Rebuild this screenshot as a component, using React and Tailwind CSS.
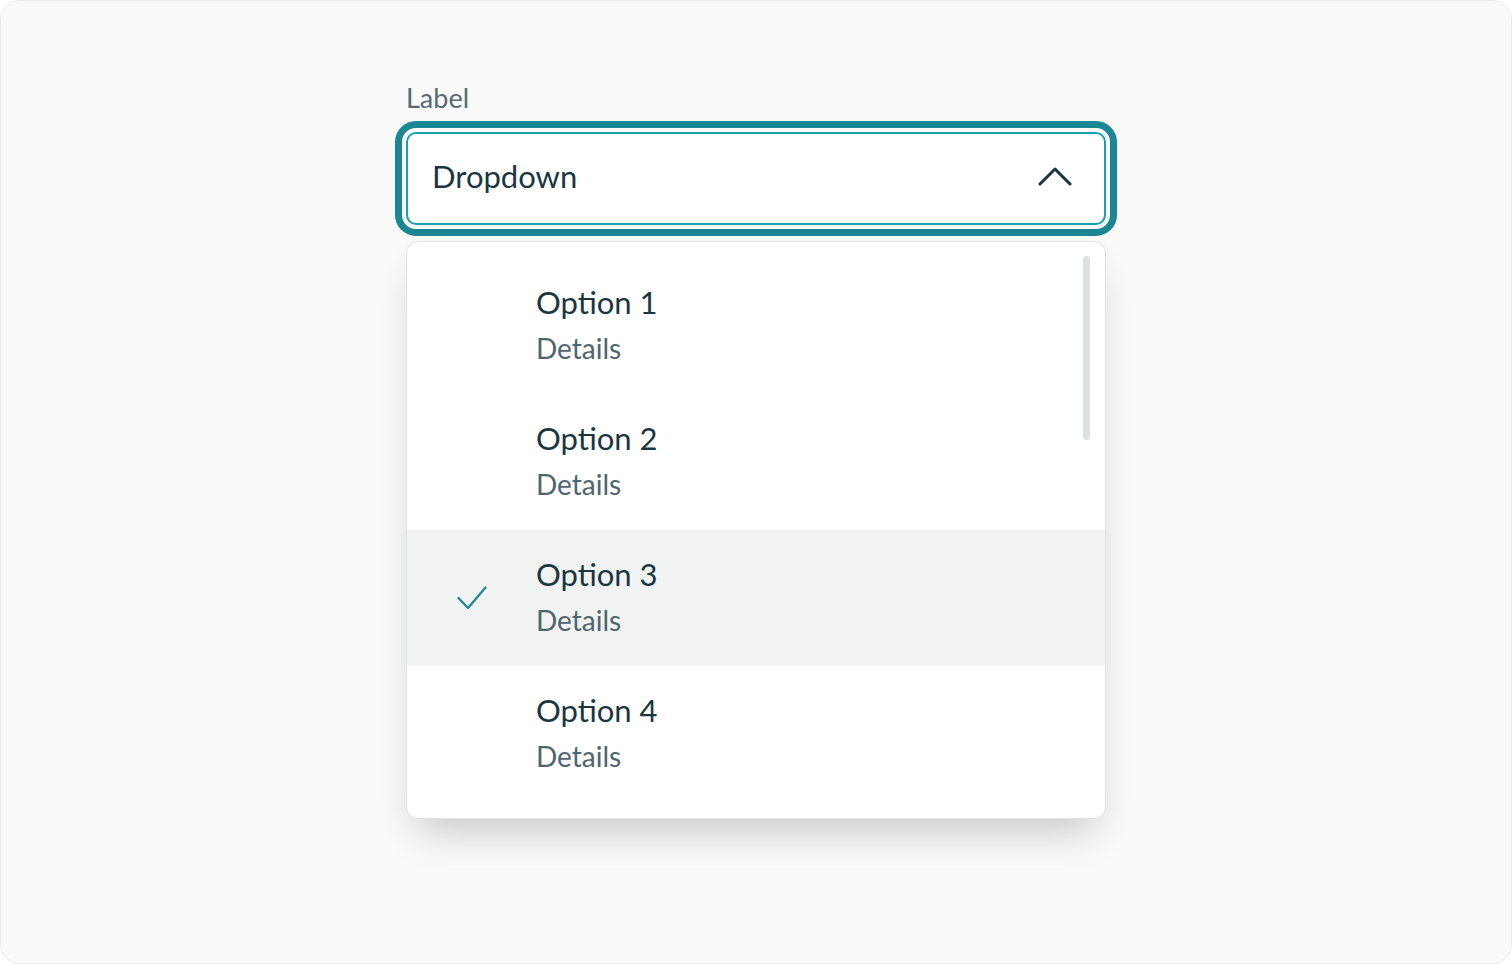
export default function App() {
  const options = [
    { title: 'Option 1', selected: false },
    { title: 'Option 2', selected: false },
    { title: 'Option 3', selected: true },
    { title: 'Option 4', selected: false },
  ]

  return (
    <main className="h-[964px] w-full bg-white font-['Lato',sans-serif]">
      <div className="flex h-full justify-center rounded-[20px] border border-[#ececec] bg-[#fafafa] pt-[81px]">
        <div className="w-[700px]">
          <div className="text-[27px] leading-[32px] text-[#566b74]">Label</div>

          {/* Champ déroulant */}
          <div className="mt-[18px] flex h-[93px] items-center justify-between rounded-[10px] border-2 border-[#17a2b1] bg-white pb-[5px] pl-[24px] pr-[32px] outline-[7px] outline-offset-[4px] outline-[#1b8794] outline-solid">
            <span className="text-[31px] leading-[36px] text-[#1b3640]">Dropdown</span>
            <svg width="34" height="20" viewBox="0 0 34 20" fill="none">
              <path d="M2 18 L17 3 L32 18" stroke="#1b3640" strokeWidth="3" strokeLinecap="round" strokeLinejoin="round" />
            </svg>
          </div>

          {/* Liste des options */}
          <div className="relative mt-[16px] rounded-[12px] border border-[#dfe3e6] bg-white py-[16px] shadow-[0_22px_40px_-10px_rgba(0,0,0,0.2)]">
            <div className="absolute right-[15px] top-[14px] h-[184px] w-[7px] rounded-full bg-[#dde1e4]" />
            {options.map((o) => (
              <div
                key={o.title}
                className={`flex h-[136px] items-center ${o.selected ? 'bg-[#f1f3f2]' : ''}`}
              >
                <div className="flex w-[129px] items-center pl-[50px]">
                  {o.selected && (
                    <svg width="30" height="26" viewBox="0 0 30 26" fill="none">
                      <path d="M1.5 13 L11 23 L28.5 2.5" stroke="#1b8794" strokeWidth="2.2" strokeLinecap="round" strokeLinejoin="round" />
                    </svg>
                  )}
                </div>
                <div className="flex flex-col gap-[11px] pb-[3px]">
                  <span className="text-[31px] leading-[36px] text-[#1b3640]">{o.title}</span>
                  <span className="text-[28px] leading-[34px] text-[#4f656e]">Details</span>
                </div>
              </div>
            ))}
          </div>
        </div>
      </div>
    </main>
  )
}
